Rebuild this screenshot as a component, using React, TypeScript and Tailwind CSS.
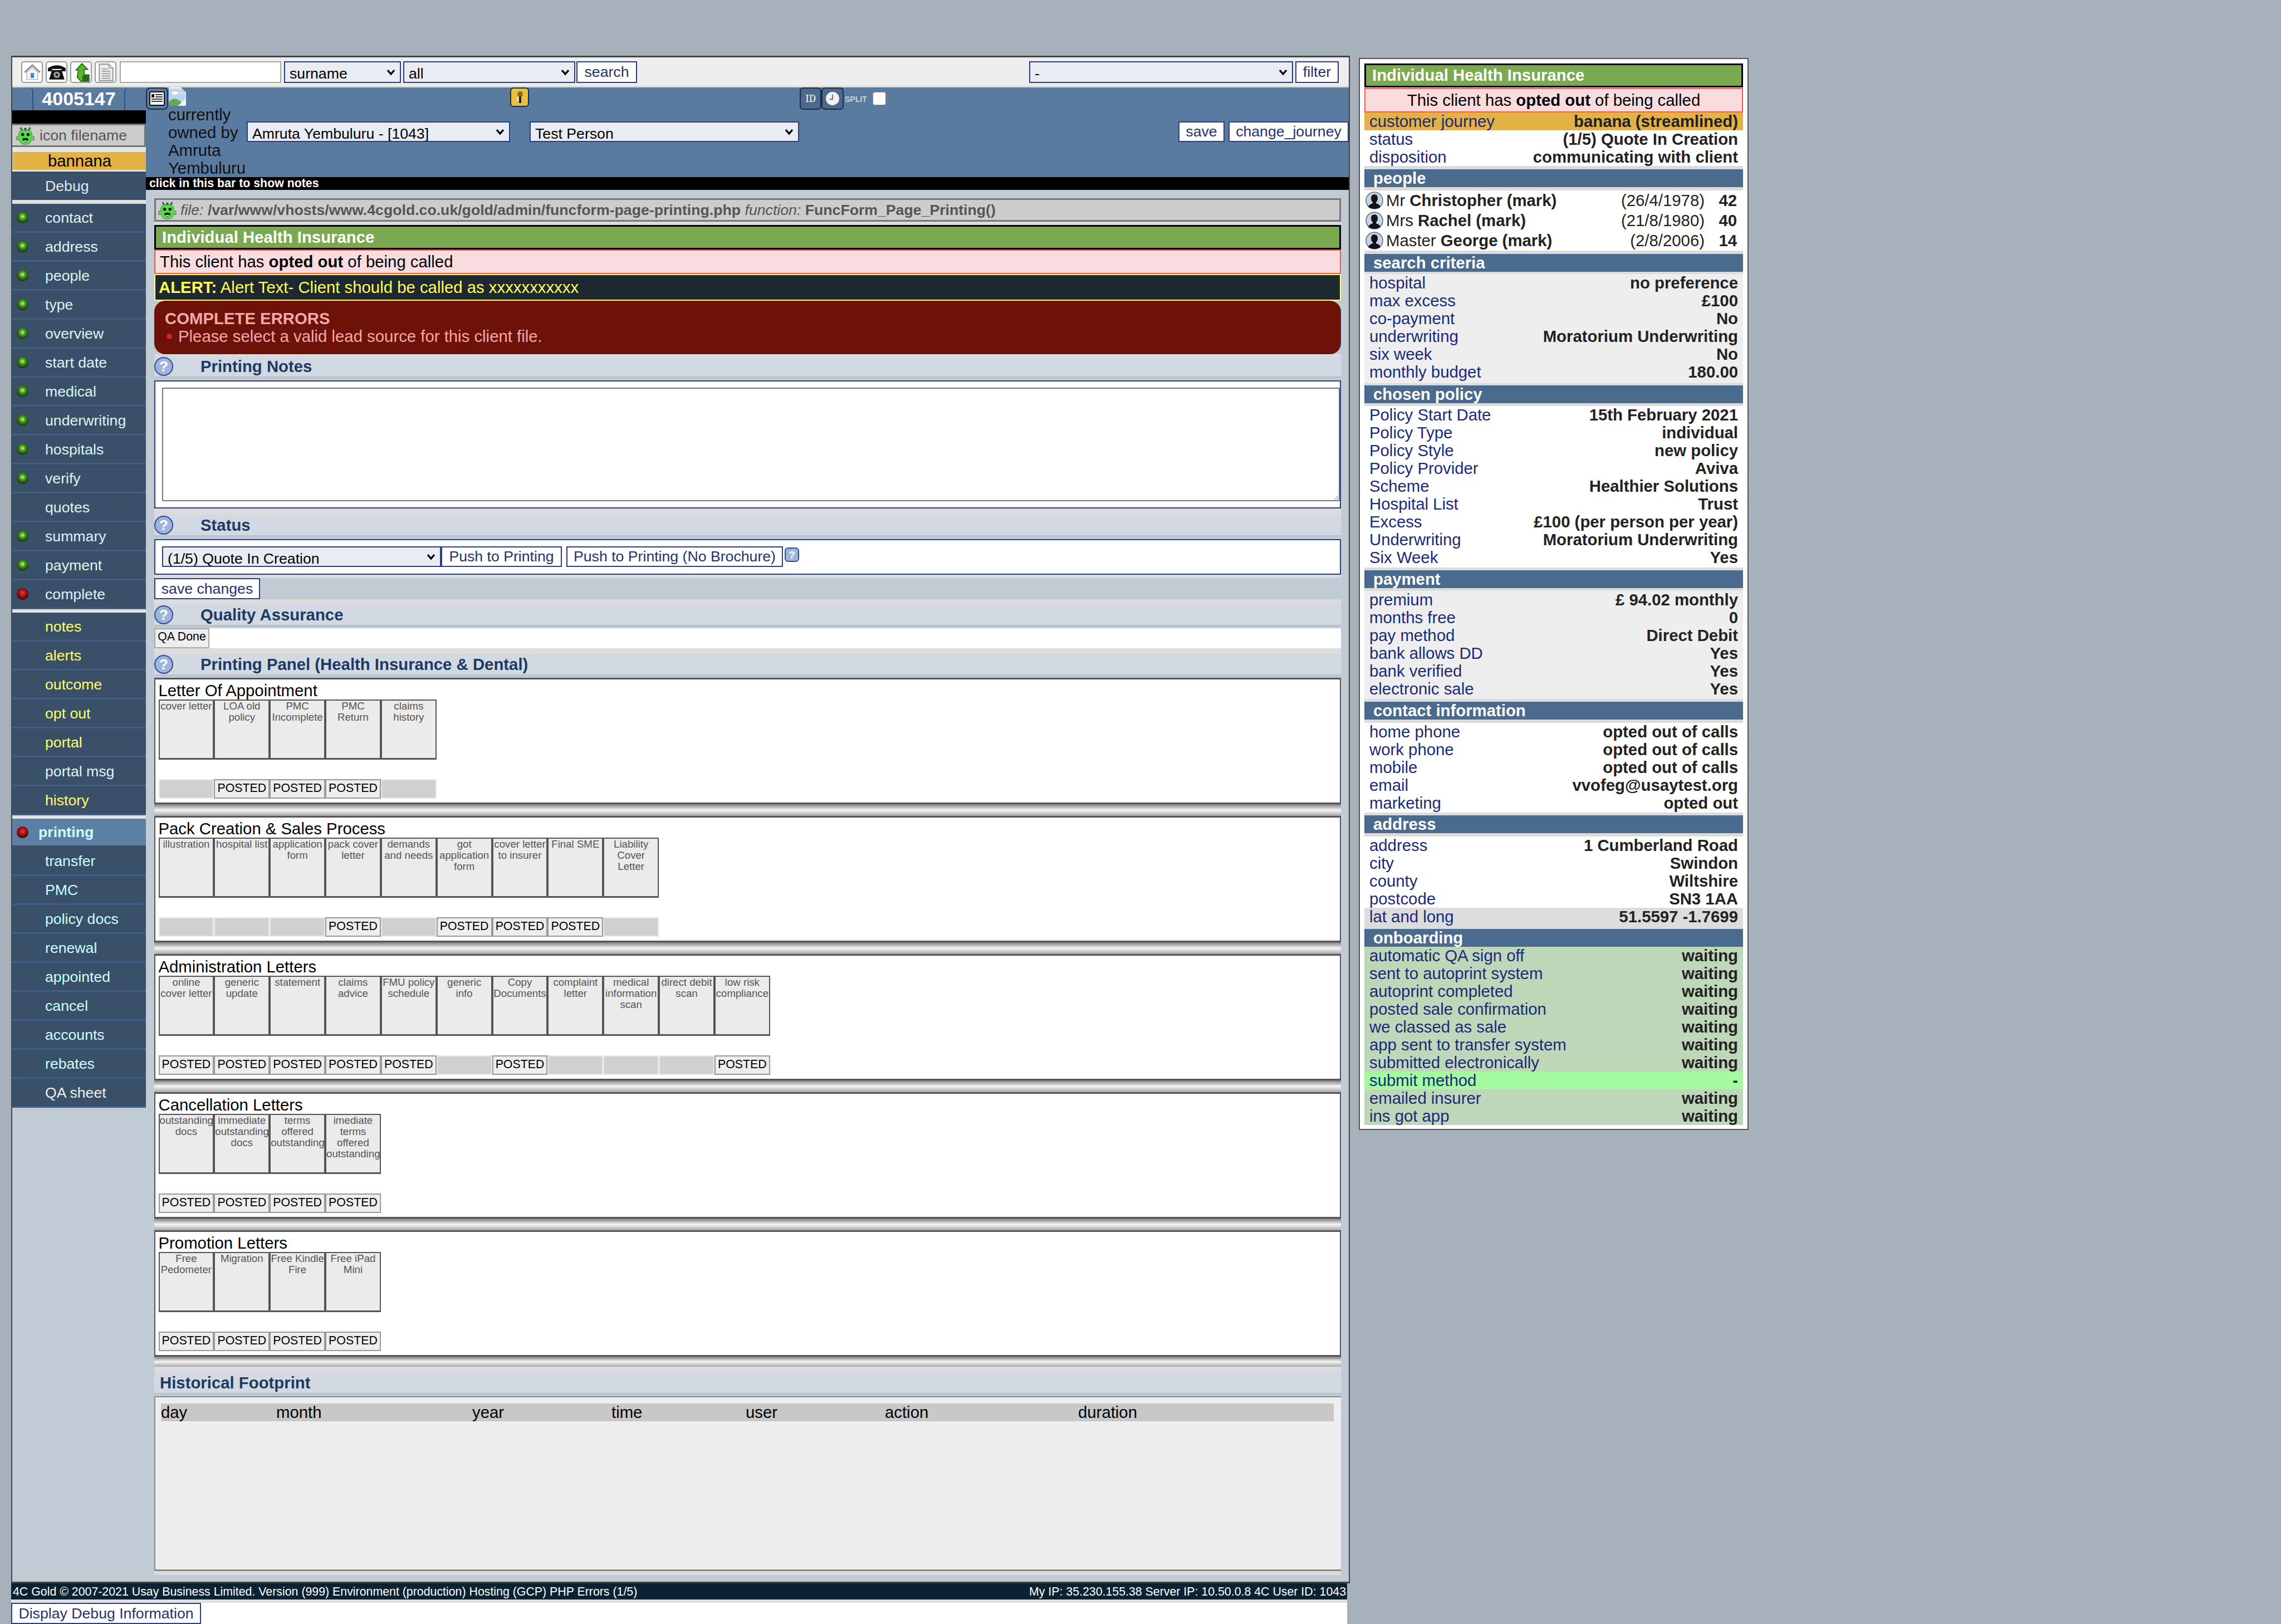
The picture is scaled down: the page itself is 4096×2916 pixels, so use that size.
import React from "react";

const NAVY = "border-[#2c4080]";

function Chevron() {
  return (
    <svg viewBox="0 0 16 12" className="absolute right-[10px] top-1/2 -translate-y-1/2 w-[16px] h-[12px] pointer-events-none">
      <path d="M2 2 L8 9 L14 2" fill="none" stroke="#000" strokeWidth="3.4" />
    </svg>
  );
}

function Sel({ value, className }: { value: string; className: string }) {
  return (
    <div className={`relative shrink-0 ${className}`}>
      <select
        defaultValue={value}
        className={`appearance-none w-full h-full border-2 ${NAVY} bg-[#e9ecf3] text-black text-[26.67px] pl-[8px] py-0 rounded-none outline-none font-['Liberation_Sans',sans-serif]`}
      >
        <option value={value}>{value}</option>
      </select>
      <Chevron />
    </div>
  );
}

function Btn({ children, className = "" }: { children: React.ReactNode; className?: string }) {
  return (
    <button className={`shrink-0 bg-white border-2 ${NAVY} text-[#23336e] text-[26.67px] leading-none text-center whitespace-nowrap ${className}`}>
      {children}
    </button>
  );
}

function Bug({ className }: { className: string }) {
  return (
    <svg viewBox="0 0 34 34" className={className}>
      <path d="M8 2 L12 9 M26 2 L22 9" stroke="#2a6a22" strokeWidth="3" />
      <circle cx="17" cy="5" r="2.4" fill="#2c40a0" />
      <path d="M5 15 Q5 7 12 7 H22 Q29 7 29 15 V17 L33 19 V25 L28 25 Q26 33 20 33 H14 Q8 33 6 25 L1 25 V19 L5 17 Z" fill="#5cd850" stroke="#2f8a2a" strokeWidth="1" />
      <circle cx="12" cy="15" r="3" fill="#0c2a0c" />
      <circle cx="22" cy="15" r="3" fill="#0c2a0c" />
      <path d="M11 23 Q17 20 23 23 Q21 29 17 29 Q13 29 11 23 Z" fill="#0c2a0c" />
      <path d="M14 26 H20 V28 H14 Z" fill="#e8f4e8" />
    </svg>
  );
}

function ToolIcon({ children }: { children: React.ReactNode }) {
  return (
    <div className="w-[39px] h-[39px] shrink-0 bg-white border-2 border-[#9a9a9a] rounded-[5px] flex items-center justify-center">
      {children}
    </div>
  );
}

function Dot({ red }: { red?: boolean }) {
  return (
    <span
      className={
        red
          ? "w-[21px] h-[21px] rounded-full shrink-0 bg-[radial-gradient(circle_at_50%_42%,#e04040,#a01010_40%,#4a0808_70%,#1a0404_92%)]"
          : "w-[21px] h-[21px] rounded-full shrink-0 bg-[radial-gradient(circle_at_50%_42%,#c0ff90,#4a9a20_30%,#1d4a10_64%,#0a1a08_92%)]"
      }
    />
  );
}

function MenuItem({ label, dot, color }: { label: string; dot?: "g" | "r"; color: string }) {
  return (
    <div className="h-[52px] bg-[#3a5069] border-b-[3px] border-[#3f5f86] flex items-center">
      <span className="w-[8px] shrink-0" />
      {dot ? <Dot red={dot === "r"} /> : <span className="w-[21px] shrink-0" />}
      <span className={`ml-[30px] mt-[1px] text-[26.67px] leading-none ${color}`}>{label}</span>
    </div>
  );
}

function Help() {
  return (
    <div className="w-[34px] h-[34px] rounded-full border-2 border-[#2f4f96] bg-[#9fb4dc] text-white font-bold text-[26px] leading-none flex items-center justify-center shrink-0">
      ?
    </div>
  );
}

function Heading({ title, help = true }: { title: string; help?: boolean }) {
  return (
    <div className="h-[40px] bg-[#d2d9e2] border-b-[3px] border-[#bcc2c9] flex items-center">
      {help ? <Help /> : null}
      <span className={`${help ? "ml-[49px]" : "ml-[10px]"} text-[29.33px] leading-none font-bold text-[#1d3a63]`}>{title}</span>
    </div>
  );
}

function Strip({ className }: { className: string }) {
  return <div className={`bg-[#dcdcdc] ${className}`} />;
}

type Tile = [string, boolean];

function Panel({ title, tiles }: { title: string; tiles: Tile[] }) {
  return (
    <div className="h-[227px] bg-white border-2 border-b-[3px] border-t-[3px] border-[#555] pl-[5.5px]">
      <div className="h-[36px] text-[29.33px] leading-[36px] text-black pt-[2px] overflow-hidden">{title}</div>
      <div className="flex h-[108px]">
        {tiles.map(([t], i) => (
          <div key={i} className="w-[99.85px] shrink-0 bg-[#ebebeb] border-2 border-b-[3px] border-[#555] text-center text-[18.67px] leading-[20px] text-[#555]">
            {t}
          </div>
        ))}
      </div>
      <div className="flex h-[35px] mt-[35px]">
        {tiles.map(([, p], i) =>
          p ? (
            <div key={i} className="w-[99.85px] shrink-0 bg-[#eeeeee] border-2 border-[#999] text-center text-[21.33px] leading-[28px] text-black">
              POSTED
            </div>
          ) : (
            <div key={i} className="w-[99.85px] shrink-0 bg-[#d0d0d0] border-2 border-[#e8e8e8]" />
          )
        )}
      </div>
    </div>
  );
}

function PanelGap() {
  return <div className="h-[21px] bg-gradient-to-b from-[#808080] via-[#f6f6f6] to-[#a8a8a8]" />;
}

function Row({ l, v, className = "" }: { l: string; v: string; className?: string }) {
  return (
    <div className={`h-[32px] flex justify-between items-center px-[9px] text-[29.33px] leading-[32px] ${className}`}>
      <span className="text-[#1a2a78] whitespace-nowrap">{l}</span>
      <span className="font-bold text-[#222] whitespace-nowrap">{v}</span>
    </div>
  );
}

function Sec({ title, top, after }: { title: string; top: string; after: string }) {
  return (
    <>
      <Strip className={top} />
      <div className="h-[32px] bg-[#4a6a8e] pl-[16px] text-white font-bold text-[29.33px] leading-[32px]">{title}</div>
      <Strip className={after} />
    </>
  );
}

function Avatar() {
  return (
    <svg viewBox="0 0 32 32" className="w-[32px] h-[32px] shrink-0">
      <circle cx="16" cy="16" r="15" fill="#c6d4e4" stroke="#5b6b80" strokeWidth="1.5" />
      <path d="M16 5 Q22 5 22 12 Q22 17 19 19 L19 21 Q26 23 27 28 Q22 31 16 31 Q10 31 5 28 Q6 23 13 21 L13 19 Q10 17 10 12 Q10 5 16 5 Z" fill="#141414" />
    </svg>
  );
}

function Person({ t, n, d, a }: { t: string; n: string; d: string; a: string }) {
  return (
    <div className="h-[36px] flex items-center pl-[2px] text-[29.33px] text-[#222] whitespace-nowrap">
      <Avatar />
      <span className="ml-[5px]">{t} <b>{n}</b></span>
      <span className="ml-auto">{d}</span>
      <b className="w-[69px] pr-[11px] text-right shrink-0 block">{a}</b>
    </div>
  );
}

const letters: [string, Tile[]][] = [
  ["Letter Of Appointment", [["cover letter", false], ["LOA old policy", true], ["PMC Incomplete", true], ["PMC Return", true], ["claims history", false]]],
  ["Pack Creation & Sales Process", [["illustration", false], ["hospital list", false], ["application form", false], ["pack cover letter", true], ["demands and needs", false], ["got application form", true], ["cover letter to insurer", true], ["Final SME", true], ["Liability Cover Letter", false]]],
  ["Administration Letters", [["online cover letter", true], ["generic update", true], ["statement", true], ["claims advice", true], ["FMU policy schedule", true], ["generic info", false], ["Copy Documents", true], ["complaint letter", false], ["medical information scan", false], ["direct debit scan", false], ["low risk compliance", true]]],
  ["Cancellation Letters", [["outstanding docs", true], ["immediate outstanding docs", true], ["terms offered outstanding", true], ["imediate terms offered outstanding", true]]],
  ["Promotion Letters", [["Free Pedometer", true], ["Migration", true], ["Free Kindle Fire", true], ["Free iPad Mini", true]]],
];

const menu1: [string, "g" | "r" | undefined][] = [
  ["contact", "g"], ["address", "g"], ["people", "g"], ["type", "g"], ["overview", "g"], ["start date", "g"], ["medical", "g"],
  ["underwriting", "g"], ["hospitals", "g"], ["verify", "g"], ["quotes", undefined], ["summary", "g"], ["payment", "g"], ["complete", "r"],
];

export default function App() {
  return (
    <div className="min-h-[2916px] h-[2916px] overflow-hidden bg-[#a7b1bc] font-['Liberation_Sans',sans-serif] flex items-start pl-[20px] pt-[100px]">
      {/* main column */}
      <div className="w-[2404px] shrink-0">
        <div className="h-[2743px] border-2 border-t-[3px] border-b-[3px] border-[#444] bg-[#c0cbd6]">
          {/* toolbar */}
          <div className="h-[54px] bg-[#eeeeee] border-b-[3px] border-[#dcdcdc] flex items-start pt-[7px] pl-[16px] pr-[18px]">
            <div className="flex gap-[5px]">
              <ToolIcon>
                <svg viewBox="0 0 32 32" className="w-[32px] h-[32px]">
                  <path d="M2 16 L16 3 L30 16" fill="none" stroke="#8b8f94" strokeWidth="3" />
                  <path d="M6 16 V29 H26 V16 L16 7 Z" fill="#f2f4f6" stroke="#b4b8bc" strokeWidth="1.5" />
                  <rect x="13" y="17" width="6" height="9" fill="#3f86e0" />
                </svg>
              </ToolIcon>
              <ToolIcon>
                <svg viewBox="0 0 32 30" className="w-[34px] h-[32px]">
                  <path d="M1 8 Q16 -2 31 8 V13 H24 V9 H8 V13 H1 Z" fill="#0c0c0c" />
                  <path d="M8 11 H24 L29 27 H3 Z" fill="#111" />
                  <circle cx="16" cy="19" r="5.5" fill="#9a9a9a" />
                  <circle cx="16" cy="19" r="2.2" fill="#111" />
                </svg>
              </ToolIcon>
              <ToolIcon>
                <svg viewBox="0 0 30 32" className="w-[32px] h-[34px]">
                  <path d="M6 12 L16 1 L26 11 L20 11 L20 20 L28 20 L28 31 L14 31 L8 24 L10 12 Z" fill="#58b52e" stroke="#1f5f14" strokeWidth="1.5" />
                  <rect x="17" y="21" width="11" height="10" fill="#1d6a1d" />
                </svg>
              </ToolIcon>
              <ToolIcon>
                <svg viewBox="0 0 28 32" className="w-[30px] h-[34px]">
                  <path d="M3 2 H19 L26 9 V30 H3 Z" fill="#f0f0f0" stroke="#9a9a9a" strokeWidth="2" />
                  <path d="M7 10 H17 M7 14 H22 M7 18 H22 M7 22 H22 M7 26 H22" stroke="#a8a8a8" strokeWidth="2" />
                  <path d="M19 2 V9 H26" fill="#ddd" stroke="#9a9a9a" strokeWidth="1.5" />
                </svg>
              </ToolIcon>
            </div>
            <input className="ml-[6px] w-[290px] h-[39px] bg-white border-2 border-[#a8a8a8] outline-none" />
            <Sel value="surname" className="ml-[5px] w-[210px] h-[39px]" />
            <Sel value="all" className="ml-[4px] w-[309px] h-[39px]" />
            <Btn className="ml-[2px] w-[109px] h-[39px]">search</Btn>
            <Sel value="-" className="ml-auto w-[474px] h-[39px]" />
            <Btn className="ml-[4px] w-[78px] h-[39px]">filter</Btn>
          </div>

          <div className="flex items-start">
            {/* left nav */}
            <div className="w-[240px] shrink-0">
              <div className="h-[41px] bg-[#5a7ba0] flex items-stretch">
                <div className="w-[38px] border-r-2 border-[#33507e] rounded-tr-[8px] shrink-0" />
                <div className="flex-1 text-center text-white font-bold text-[34px] leading-[41px]">4005147</div>
                <div className="w-[39px] border-l-2 border-[#33507e] rounded-tl-[8px] shrink-0" />
              </div>
              <div className="h-[24px] bg-black" />
              <div className="h-[42px] bg-[#cccccc] border-y-[3px] border-[#777] border-r-[3px] flex items-center pl-[7px]">
                <Bug className="w-[33px] h-[33px] shrink-0" />
                <span className="ml-[9px] text-[26.67px] text-[#555] leading-none">icon filename</span>
              </div>
              <div className="h-[9px] bg-[#e4e4e4]" />
              <div className="h-[32px] bg-[#e4b244] text-black text-center text-[29.33px] leading-[32px] ml-[2px]">bannana</div>
              <div className="h-[3px] bg-[#e8e8e8]" />
              <div className="h-[51px] bg-[#3a5069] flex items-center pl-[59px] text-[26.67px] text-[#e0e8f0]">Debug</div>
              <div className="h-[7px] bg-[#e2e2e2]" />
              {menu1.map(([l, d]) => (
                <MenuItem key={l} label={l} dot={d} color="text-[#dcf4f6]" />
              ))}
              <div className="h-[6px] bg-[#e2e2e2]" />
              {["notes", "alerts", "outcome", "opt out", "portal", "portal msg", "history"].map((l) => (
                <MenuItem key={l} label={l} color={l === "portal msg" ? "text-[#dff4f0]" : "text-[#ffff66]"} />
              ))}
              <div className="h-[6px] bg-[#e2e2e2]" />
              <div className="h-[51px] bg-[#5d7fa3] border-b-[3px] border-[#3a5069] flex items-center pl-[8px]">
                <Dot red />
                <span className="ml-[18px] text-[26.67px] font-bold text-[#ccffff] leading-none">printing</span>
              </div>
              {["transfer", "PMC", "policy docs", "renewal", "appointed", "cancel", "accounts", "rebates", "QA sheet"].map((l) => (
                <MenuItem key={l} label={l} color={l === "QA sheet" ? "text-[#eeeeee]" : "text-[#ccffff]"} />
              ))}
            </div>

            {/* right of nav */}
            <div className="w-[2160px] shrink-0">
              {/* blue header */}
              <div className="h-[161px] bg-[#5a7ba0] flex items-start">
                <div className="w-[40px] h-[40px] shrink-0 border-2 border-[#1b2b44] rounded-[8px] bg-[#5a7ba0] flex items-center justify-center">
                  <svg viewBox="0 0 28 26" className="w-[28px] h-[26px]">
                    <rect x="1" y="1" width="26" height="24" rx="1" fill="#fff" stroke="#111" strokeWidth="2" />
                    <rect x="4" y="5" width="5" height="6" fill="#111" />
                    <path d="M11 6 H24 M11 10 H24 M4 14 H24 M4 18 H24" stroke="#333" strokeWidth="2" />
                  </svg>
                </div>
                <div className="w-[141px] shrink-0 text-[29.33px] leading-[32px] text-[#111]">
                  <svg viewBox="0 0 33 33" className="w-[33px] h-[33px] block">
                    <path d="M1 0 H23 L32 9 V33 H1 Z" fill="#f4f6f8" />
                    <path d="M23 0 V9 H32 Z" fill="#c8ccd0" />
                    <path d="M1 2 H22 V10 H31 V26 H1 Z" fill="#bcd4f0" />
                    <ellipse cx="12" cy="10" rx="6" ry="3" fill="#fff" />
                    <path d="M1 33 V26 Q12 14 24 27 L18 33 Z" fill="#6aa84f" />
                    <path d="M18 33 L32 20 V33 Z" fill="#f4f6f8" />
                  </svg>
                  currently owned by Amruta Yembuluru
                </div>
                <div className="flex-1 min-w-0">
                  <div className="h-[61px] flex items-start">
                    <div className="ml-[473px] w-[34px] h-[35px] shrink-0 border-2 border-[#1b2b44] rounded-[6px] bg-[#e8c040] flex items-center justify-center">
                      <svg viewBox="0 0 16 24" className="w-[16px] h-[24px]">
                        <circle cx="9" cy="6" r="5" fill="#8a6a10" />
                        <rect x="7" y="10" width="4" height="12" fill="#222" />
                        <path d="M3 13 H7 M3 17 H7" stroke="#fff" strokeWidth="2" />
                      </svg>
                    </div>
                    <div className="ml-[486px] w-[39px] h-[40px] shrink-0 border-2 border-[#1b2b44] rounded-[6px] bg-[#4a6a8e] flex items-center justify-center text-[19px] font-serif text-white leading-none">
                      ID
                    </div>
                    <div className="w-[40px] h-[40px] shrink-0 border-2 border-[#1b2b44] rounded-[6px] bg-[#4a6a8e] flex items-center justify-center">
                      <svg viewBox="0 0 24 24" className="w-[26px] h-[26px]">
                        <circle cx="12" cy="12" r="11" fill="#f2f2f2" />
                        <path d="M12 5 V13 H7" fill="none" stroke="#777" strokeWidth="2" />
                      </svg>
                    </div>
                    <span className="ml-[2px] mt-[14px] text-[14px] leading-none font-bold text-[#d0d0d0]">SPLIT</span>
                    <input type="checkbox" className="ml-[10px] mt-[8px] w-[24px] h-[24px] appearance-none bg-white border border-[#888] rounded-[4px]" />
                  </div>
                  <div className="flex items-center h-[37px]">
                    <Sel value="Amruta Yembuluru - [1043]" className="w-[473px] h-[37px]" />
                    <Sel value="Test Person" className="ml-[35px] w-[484px] h-[37px]" />
                    <Btn className="ml-auto w-[83px] h-[37px]">save</Btn>
                    <Btn className="ml-[7px] w-[216px] h-[37px]">change_journey</Btn>
                  </div>
                </div>
              </div>
              <div className="h-[23px] bg-black text-white font-bold text-[21.33px] leading-[23px] pl-[6px]">click in this bar to show notes</div>

              {/* content */}
              <div className="ml-[15px] w-[2131px] mt-[15px]">
                <div className="h-[42px] bg-[#cccccc] border-[3px] border-[#777] flex items-center pl-[4px] text-[26.67px] text-[#555] whitespace-nowrap">
                  <Bug className="w-[33px] h-[33px] shrink-0" />
                  <span className="ml-[7px]">
                    <i>file:</i> <b>/var/www/vhosts/www.4cgold.co.uk/gold/admin/funcform-page-printing.php</b> <i>function:</i> <b>FuncForm_Page_Printing()</b>
                  </span>
                </div>
                <Strip className="h-[6px]" />
                <div className="h-[44px] bg-[#7aa952] border-[3px] border-black text-white font-bold text-[29.33px] leading-[37px] pl-[11px]">Individual Health Insurance</div>
                <div className="h-[44px] bg-[#f9dcdd] border-2 border-[#f55] text-black text-[29.33px] leading-[40px] pl-[8px]">
                  This client has <b>opted out</b> of being called
                </div>
                <div className="h-[48px] bg-[#1e2830] border-2 border-[#ffff55] text-[#ffff55] text-[29.33px] leading-[44px] pl-[6px]">
                  <b>ALERT:</b> Alert Text- Client should be called as xxxxxxxxxxx
                </div>
                <div className="h-[96px] bg-[#6e1108] rounded-[20px] text-[#f4a9a9] pl-[19px] pt-[16px] text-[29.33px] leading-[32px]">
                  <div className="font-bold">COMPLETE ERRORS</div>
                  <div className="flex items-center">
                    <span className="w-[10px] h-[10px] rounded-full bg-[#d92020] ml-[3px] mr-[11px]" />
                    Please select a valid lead source for this client file.
                  </div>
                </div>
                <Strip className="h-[3px]" />
                <Heading title="Printing Notes" />
                <div className={`mt-[4px] h-[230px] bg-white border-2 ${NAVY} pl-[12px] pt-[11px]`}>
                  <textarea className="block w-[2115px] h-[204px] bg-white border-2 border-[#777] rounded-[2px] outline-none" />
                </div>
                <Strip className="h-[11px]" />
                <Heading title="Status" />
                <div className={`mt-[4px] h-[64px] bg-white border-2 ${NAVY} pl-[12px] pt-[11px] flex items-start`}>
                  <Sel value="(1/5) Quote In Creation" className="w-[501px] h-[37px]" />
                  <Btn className="w-[217px] h-[37px]">Push to Printing</Btn>
                  <Btn className="ml-[8px] w-[389px] h-[37px]">Push to Printing (No Brochure)</Btn>
                  <div className="ml-[3px] mt-[2px] w-[26px] h-[26px] rounded-[6px] border-2 border-[#2f4f96] bg-[#9fb4dc] text-white font-bold text-[19px] leading-none flex items-center justify-center shrink-0">
                    ?
                  </div>
                </div>
                <Strip className="h-[6px]" />
                <Btn className="block w-[190px] h-[38px]">save changes</Btn>
                <Strip className="h-[9px]" />
                <Heading title="Quality Assurance" />
                <div className="mt-[3px] h-[36px] bg-white">
                  <div className="w-[99px] h-[36px] bg-[#eeeeee] border-2 border-[#aaa] text-black text-[21.33px] leading-[26px] text-center">QA Done</div>
                </div>
                <Strip className="h-[10px]" />
                <Heading title="Printing Panel (Health Insurance & Dental)" />
                <div className="mt-[3px]">
                  {letters.map(([t, tiles], i) => (
                    <React.Fragment key={t}>
                      <Panel title={t} tiles={tiles} />
                      {i < letters.length - 1 ? <PanelGap /> : null}
                    </React.Fragment>
                  ))}
                </div>
                <div className="h-[18px] bg-gradient-to-b from-[#808080] via-[#f6f6f6] to-[#a8a8a8]" />
                <Strip className="h-[10px]" />
                <Heading title="Historical Footprint" help={false} />
                <div className="mt-[3px] h-[314px] bg-[#eeeeee] border-l-2 border-t-2 border-b-[3px] border-[#888] pl-[10px] pr-[13px] pt-[11px]">
                  <div className="h-[32px] bg-[#c8c8c8] flex text-[29.33px] leading-[32px] text-black">
                    <span className="w-[207px] shrink-0">day</span>
                    <span className="w-[352px] shrink-0">month</span>
                    <span className="w-[250px] shrink-0">year</span>
                    <span className="w-[241px] shrink-0">time</span>
                    <span className="w-[250px] shrink-0">user</span>
                    <span className="w-[347px] shrink-0">action</span>
                    <span>duration</span>
                  </div>
                </div>
                <Strip className="h-[7px]" />
              </div>
            </div>
          </div>
        </div>

        {/* footer */}
        <div className="w-[2399px] h-[29px] bg-[#0b2233] text-white text-[21.33px] leading-[31px] flex justify-between pl-[3px] pr-[2px] whitespace-nowrap">
          <span>4C Gold © 2007-2021 Usay Business Limited. Version (999) Environment (production) Hosting (GCP) PHP Errors (1/5)</span>
          <span>My IP: 35.230.155.38 Server IP: 10.50.0.8 4C User ID: 1043</span>
        </div>
        <div className="w-[2399px] h-[44px] bg-white">
          <div className="h-[6px] bg-[#e0e0e0]" />
          <Btn className="block w-[341px] h-[38px]">Display Debug Information</Btn>
        </div>
      </div>

      {/* right panel */}
      <div className="ml-[16px] mt-[4px] w-[700px] h-[1925px] shrink-0 bg-white border-2 border-[#555] px-[8px] pt-[8px]">
        <div className="h-[43px] bg-[#7aa952] border-[3px] border-black text-white font-bold text-[29.33px] leading-[36px] pl-[11px]">Individual Health Insurance</div>
        <div className="mt-[1px] h-[44px] bg-[#f9dcdd] border-2 border-[#f55] text-black text-center text-[29.33px] leading-[40px]">
          This client has <b>opted out</b> of being called
        </div>
        <Row l="customer journey" v="banana (streamlined)" className="bg-[#e4b244]" />
        <Row l="status" v="(1/5) Quote In Creation" />
        <Row l="disposition" v="communicating with client" />

        <Sec title="people" top="h-[6px]" after="h-[6px]" />
        <Person t="Mr" n="Christopher (mark)" d="(26/4/1978)" a="42" />
        <Person t="Mrs" n="Rachel (mark)" d="(21/8/1980)" a="40" />
        <Person t="Master" n="George (mark)" d="(2/8/2006)" a="14" />

        <Sec title="search criteria" top="h-[6px]" after="h-[4px]" />
        <div className="bg-[#eeeeee] pb-[4px]">
          <Row l="hospital" v="no preference" />
          <Row l="max excess" v="£100" />
          <Row l="co-payment" v="No" />
          <Row l="underwriting" v="Moratorium Underwriting" />
          <Row l="six week" v="No" />
          <Row l="monthly budget" v="180.00" />
        </div>

        <Sec title="chosen policy" top="h-[4px]" after="h-[5px]" />
        <div className="pb-[2px]">
          <Row l="Policy Start Date" v="15th February 2021" />
          <Row l="Policy Type" v="individual" />
          <Row l="Policy Style" v="new policy" />
          <Row l="Policy Provider" v="Aviva" />
          <Row l="Scheme" v="Healthier Solutions" />
          <Row l="Hospital List" v="Trust" />
          <Row l="Excess" v="£100 (per person per year)" />
          <Row l="Underwriting" v="Moratorium Underwriting" />
          <Row l="Six Week" v="Yes" />
        </div>

        <Sec title="payment" top="h-[5px]" after="h-[5px]" />
        <div className="bg-[#eeeeee] pb-[2px]">
          <Row l="premium" v="£ 94.02 monthly" />
          <Row l="months free" v="0" />
          <Row l="pay method" v="Direct Debit" />
          <Row l="bank allows DD" v="Yes" />
          <Row l="bank verified" v="Yes" />
          <Row l="electronic sale" v="Yes" />
        </div>

        <Sec title="contact information" top="h-[5px]" after="h-[6px]" />
        <div className="pb-[1px]">
          <Row l="home phone" v="opted out of calls" />
          <Row l="work phone" v="opted out of calls" />
          <Row l="mobile" v="opted out of calls" />
          <Row l="email" v="vvofeg@usaytest.org" />
          <Row l="marketing" v="opted out" />
        </div>

        <Sec title="address" top="h-[5px]" after="h-[6px]" />
        <Row l="address" v="1 Cumberland Road" />
        <Row l="city" v="Swindon" />
        <Row l="county" v="Wiltshire" />
        <Row l="postcode" v="SN3 1AA" />
        <Row l="lat and long" v="51.5597 -1.7699" className="bg-[#dcdcdc]" />

        <Sec title="onboarding" top="h-[6px]" after="h-0" />
        <div className="bg-[#bed7b9]">
          <Row l="automatic QA sign off" v="waiting" />
          <Row l="sent to autoprint system" v="waiting" />
          <Row l="autoprint completed" v="waiting" />
          <Row l="posted sale confirmation" v="waiting" />
          <Row l="we classed as sale" v="waiting" />
          <Row l="app sent to transfer system" v="waiting" />
          <Row l="submitted electronically" v="waiting" />
          <Row l="submit method" v="-" className="bg-[#a4fb9f]" />
          <Row l="emailed insurer" v="waiting" />
          <Row l="ins got app" v="waiting" />
        </div>
      </div>
    </div>
  );
}
